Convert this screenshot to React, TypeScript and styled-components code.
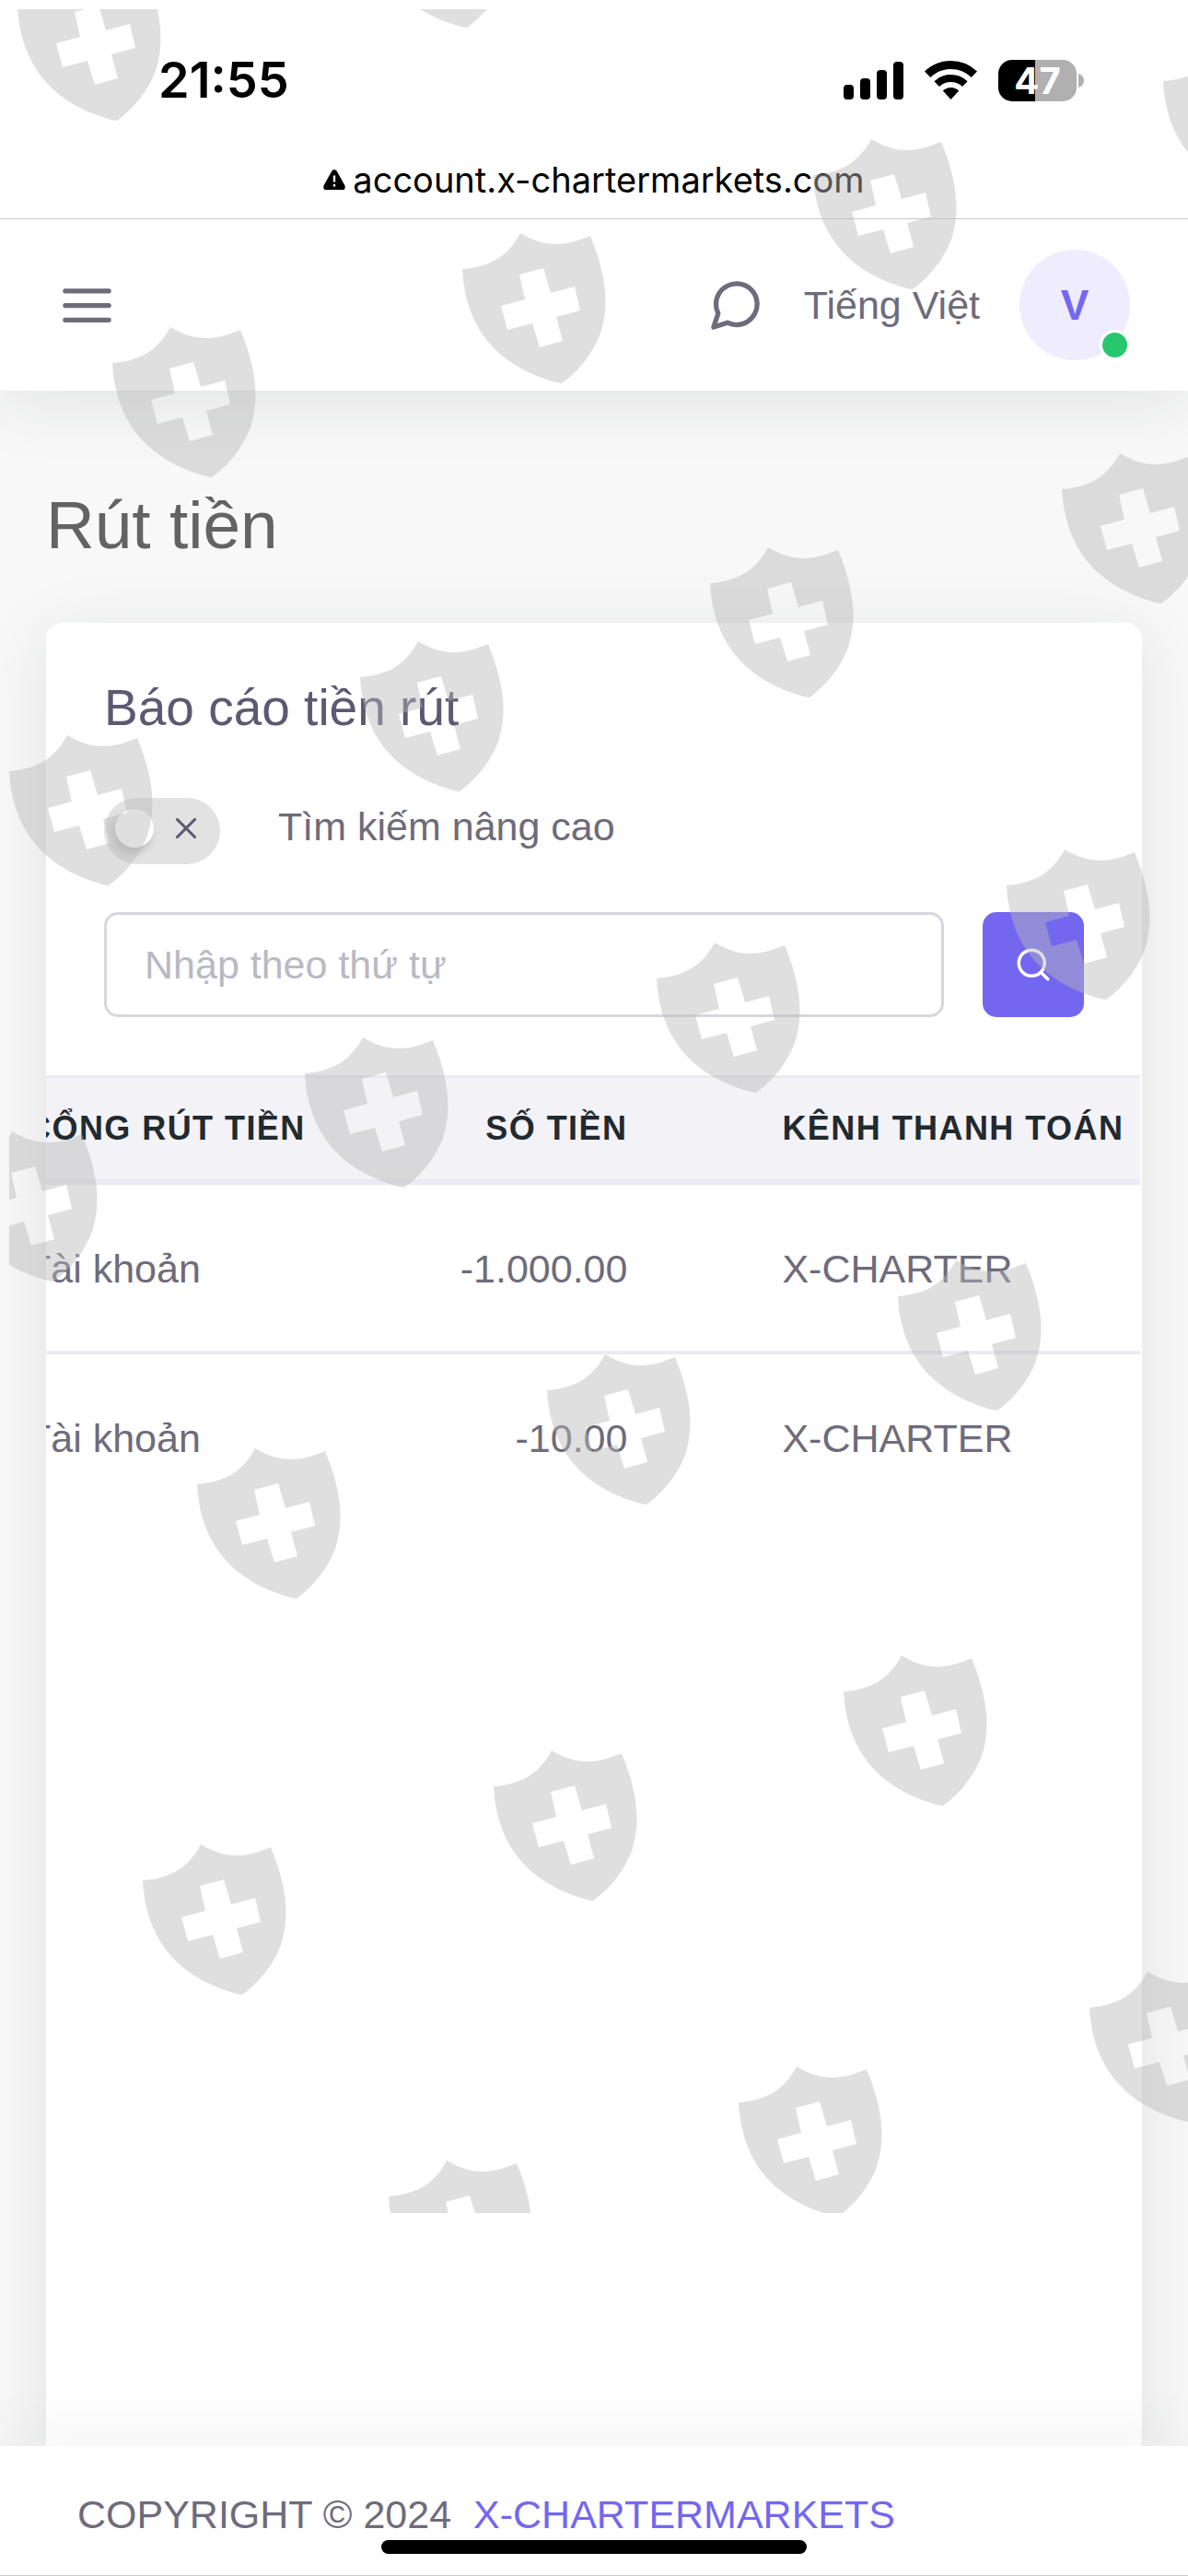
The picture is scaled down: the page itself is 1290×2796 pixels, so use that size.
import React, { useLayoutEffect, useRef } from "react";
import styled, { createGlobalStyle } from "styled-components";
import { Search, X } from "lucide-react";

const GlobalStyle = createGlobalStyle`
  *, *::before, *::after { box-sizing: border-box; }
  body {
    margin: 0;
    background: #f8f8f8;
    color: #6e6b7b;
    font-family: "Liberation Sans", Arial, sans-serif;
    font-size: 43px;
    line-height: 63px;
  }
`;

const Page = styled.div`
  position: relative;
  display: flex;
  flex-direction: column;
  min-height: 100vh;
  overflow: hidden;
`;

/* ---------- phone status and address bars ---------- */

const BrowserChrome = styled.div`
  position: relative;
  z-index: 3;
  background: #fff;
  border-bottom: 1px solid #c8c8c8;
  color: #000;
  font-family: Inter, sans-serif;
`;

const StatusBar = styled.div`
  display: flex;
  align-items: center;
  justify-content: space-between;
  height: 174px;
  padding: 0 113px 0 172px;
`;

const Clock = styled.time`
  font-size: 54px;
  font-weight: 600;
  line-height: 64px;
`;

const StatusIcons = styled.div`
  display: flex;
  align-items: center;
  gap: 23px;
`;

const BatteryWrap = styled.div`
  display: flex;
  align-items: center;
  gap: 2px;
`;

const BatteryBody = styled.div`
  display: flex;
  align-items: center;
  justify-content: center;
  width: 85px;
  height: 45px;
  border-radius: 15px;
  background: linear-gradient(to right, #000 47%, #b0b0b0 47%);
  color: #fff;
  font-size: 40px;
  font-weight: 700;
  line-height: 45px;
`;

const AddressBar = styled.div`
  display: flex;
  align-items: center;
  justify-content: center;
  gap: 8px;
  padding-bottom: 21px;
  font-size: 38px;
  line-height: 42px;
`;

/* ---------- navbar ---------- */

const Navbar = styled.header`
  position: relative;
  z-index: 2;
  display: flex;
  align-items: center;
  justify-content: space-between;
  padding: 33px 63px;
  background: #fff;
  box-shadow: 0 12px 72px rgba(34, 41, 47, 0.1);
`;

const NavGroup = styled.nav`
  display: flex;
  align-items: center;
  gap: 43px;
`;

const IconButton = styled.button`
  display: flex;
  padding: 0;
  border: 0;
  background: none;
  color: inherit;
`;

const NavLink = styled.a`
  color: inherit;
  text-decoration: none;
`;

const Avatar = styled.button`
  position: relative;
  width: 120px;
  height: 120px;
  padding: 0;
  border: 0;
  border-radius: 50%;
  background: #efedfd;
  color: #7367f0;
  font: 700 46px/63px "Liberation Sans", Arial, sans-serif;
`;

const OnlineDot = styled.span`
  position: absolute;
  right: 0;
  bottom: 0;
  width: 33px;
  height: 33px;
  border: 3px solid #fff;
  border-radius: 50%;
  background: #28c76f;
`;

/* ---------- content ---------- */

const Main = styled.main`
  display: flex;
  flex: 1;
  flex-direction: column;
  padding: 103px 50px 0;
`;

const PageTitle = styled.h1`
  margin: 0 0 63px;
  color: #636363;
  font-size: 73px;
  font-weight: 400;
  line-height: 86px;
`;

const Card = styled.section`
  flex: 1;
  overflow: hidden;
  border-radius: 18px 18px 0 0;
  background: #fff;
`;

const CardShadow = styled.div`
  display: flex;
  flex: 1;
  flex-direction: column;
  border-radius: 18px 18px 0 0;
  box-shadow: 0 12px 72px rgba(34, 41, 47, 0.1);
`;

const CardBody = styled.div`
  padding: 63px;
`;

const CardTitle = styled.h2`
  margin: 0 0 69px;
  color: #5e5873;
  font-size: 55px;
  font-weight: 400;
  line-height: 58px;
`;

const SwitchLabel = styled.label`
  display: flex;
  align-items: flex-start;
  gap: 63px;
  margin-bottom: 52px;
`;

const SwitchInput = styled.input`
  position: absolute;
  width: 1px;
  height: 1px;
  margin: 0;
  opacity: 0;
`;

const SwitchTrack = styled.span`
  display: flex;
  align-items: center;
  justify-content: space-between;
  width: 126px;
  height: 72px;
  padding: 12px 18px 18px 12px;
  border-radius: 36px;
  background: #e2e2e2;
  color: #5e5873;
`;

const SwitchKnob = styled.span`
  width: 42px;
  height: 42px;
  border-radius: 50%;
  background: #fff;
  box-shadow: -3px 6px 9px rgba(34, 41, 47, 0.2);
`;

const SearchForm = styled.form`
  display: flex;
  gap: 42px;
`;

const SearchInput = styled.input`
  flex: 1;
  min-width: 0;
  height: 114px;
  padding: 0 41px;
  border: 3px solid #d8d6de;
  border-radius: 15px;
  background: transparent;
  color: #6e6b7b;
  font: inherit;
  &::placeholder { color: #b9b9c3; opacity: 1; }
`;

const SearchButton = styled.button`
  display: flex;
  align-items: center;
  justify-content: center;
  width: 110px;
  height: 114px;
  padding: 0;
  border: 0;
  border-radius: 15px;
  background: #7367f0;
  color: #fff;
`;

const TableScroller = styled.div`
  margin-right: 2px;
  overflow-x: auto;
  scrollbar-width: none;
`;

const Table = styled.table`
  min-width: 100%;
  border-spacing: 0;
  white-space: nowrap;
`;

const HeadCell = styled.th<{ $end?: boolean }>`
  padding: 28px 84px;
  border-top: 3px solid #ebe9f1;
  border-bottom: 6px solid #ebe9f1;
  background: #f3f2f7;
  color: #22292f;
  font-size: 36px;
  letter-spacing: 0.04em;
  line-height: 54px;
  text-align: ${(p) => (p.$end ? "right" : "left")};
  text-transform: uppercase;
`;

const Row = styled.tr`
  & + & > td { border-top: 4px solid #ebe9f1; }
`;

const Cell = styled.td<{ $end?: boolean }>`
  padding: 59px 84px 57px;
  line-height: 64px;
  text-align: ${(p) => (p.$end ? "right" : "left")};
`;

/* ---------- footer ---------- */

const Footer = styled.footer`
  position: relative;
  z-index: 2;
  padding: 43px 84px 34px;
  border-bottom: 1px solid #c8c8c8;
  background: #fff;
  box-shadow: 0 -12px 72px rgba(34, 41, 47, 0.05);
`;

const FooterLink = styled.a`
  margin-left: 12px;
  color: #7367f0;
  text-decoration: none;
`;

const HomeIndicator = styled.div`
  position: absolute;
  bottom: 23px;
  left: 50%;
  width: 462px;
  height: 15px;
  margin-left: -231px;
  border-radius: 8px;
  background: #000;
`;

/* ---------- watermark ---------- */

const Watermark = styled.svg`
  position: absolute;
  z-index: 4;
  top: 10px;
  left: 10px;
  width: calc(100% - 10px);
  height: 2392px;
  overflow: hidden;
  pointer-events: none;
`;

const shields: [number, number][] = [
  [397, -146], [17, -45], [1261, 36], [881, 138], [500, 240], [120, 342],
  [1151, 479], [769, 581], [389, 683], [8, 785],
  [1091, 909], [711, 1010], [329, 1113], [-52, 1215],
  [973, 1355], [592, 1457], [212, 1559],
  [914, 1784], [534, 1887], [153, 1989],
  [1181, 2127], [800, 2230], [420, 2332],
];

const shieldPath =
  "M2 52C32 50 52 38 65 13C92 29 112 28 141 16C160 62 161 94 152 122C143 145 128 163 110 176Q106 176 97 173C36 154 5 112 2 52Z" +
  "M64 58L70 85L44 92L51 118L78 111L86 137L111 130L104 104L130 97L124 71L98 78L90 51Z";

function ShieldWatermark() {
  return (
    <Watermark aria-hidden="true">
      {shields.map(([x, y]) => (
        <path
          key={`${x},${y}`}
          d={shieldPath}
          transform={`translate(${x - 10} ${y - 10})`}
          fill="#b8b8b8"
          fillOpacity="0.45"
          fillRule="evenodd"
        />
      ))}
    </Watermark>
  );
}

function SignalIcon() {
  return (
    <svg width="65" height="41" aria-hidden="true">
      <rect x="0" y="25" width="11" height="16" rx="4" />
      <rect x="18" y="18" width="11" height="23" rx="4" />
      <rect x="36" y="9" width="11" height="32" rx="4" />
      <rect x="54" y="0" width="11" height="41" rx="4" />
    </svg>
  );
}

function WifiIcon() {
  return (
    <svg width="57" height="42" aria-hidden="true">
      <g fill="none" stroke="#000">
        <path d="M3.1 14.8A36.5 36.5 0 0 1 53.9 14.8" strokeWidth="9" />
        <path d="M13.2 25.2A22 22 0 0 1 43.8 25.2" strokeWidth="8" />
      </g>
      <path d="M19.8 32.5A12.5 12.5 0 0 1 37.2 32.5L28.5 42Z" />
    </svg>
  );
}

function WarningIcon() {
  return (
    <svg width="24" height="22" viewBox="0 0 24 22" aria-hidden="true">
      <path d="M9.4 1.6Q12 -1.6 14.6 1.6L23.4 17.2Q24.6 22 20.6 22H3.4Q-0.6 22 0.6 17.2Z" />
      <path d="M12 6.5V13.5M12 16V18.4" stroke="#fff" strokeWidth="2.4" />
    </svg>
  );
}

const line = {
  fill: "none",
  stroke: "currentColor",
  strokeWidth: 2,
  strokeLinecap: "round" as const,
  strokeLinejoin: "round" as const,
};

function MenuIcon() {
  return (
    <svg width="63" height="63" viewBox="0 0 24 24" {...line} aria-hidden="true">
      <path d="M3 6H21M3 12H21M3 18H21" />
    </svg>
  );
}

function ChatIcon() {
  return (
    <svg width="63" height="63" viewBox="0 0 24 24" {...line} aria-hidden="true">
      <path d="M21 11.5a8.38 8.38 0 0 1-.9 3.8 8.5 8.5 0 0 1-7.6 4.7 8.38 8.38 0 0 1-3.8-.9L3 21l1.9-5.7a8.38 8.38 0 0 1-.9-3.8 8.5 8.5 0 0 1 4.7-7.6 8.38 8.38 0 0 1 3.8-.9h.5a8.48 8.48 0 0 1 8 8v.5z" />
    </svg>
  );
}

const withdrawals = [
  { gateway: "Tài khoản", amount: "-1.000.00", channel: "X-CHARTER" },
  { gateway: "Tài khoản", amount: "-10.00", channel: "X-CHARTER" },
];

function WithdrawalTable() {
  const scroller = useRef<HTMLDivElement>(null);

  useLayoutEffect(() => {
    if (scroller.current) scroller.current.scrollLeft = 105;
  }, []);

  return (
    <TableScroller ref={scroller}>
      <Table>
        <thead>
          <tr>
            <HeadCell scope="col">Cổng rút tiền</HeadCell>
            <HeadCell scope="col" $end>Số tiền</HeadCell>
            <HeadCell scope="col">Kênh thanh toán</HeadCell>
          </tr>
        </thead>
        <tbody>
          {withdrawals.map((w) => (
            <Row key={w.amount}>
              <Cell>{w.gateway}</Cell>
              <Cell $end>{w.amount}</Cell>
              <Cell>{w.channel}</Cell>
            </Row>
          ))}
        </tbody>
      </Table>
    </TableScroller>
  );
}

export default function App() {
  return (
    <>
      <GlobalStyle />
      <Page>
        <BrowserChrome>
          <StatusBar>
            <Clock>21:55</Clock>
            <StatusIcons>
              <SignalIcon />
              <WifiIcon />
              <BatteryWrap>
                <BatteryBody>47</BatteryBody>
                <svg width="6" height="15" aria-hidden="true">
                  <path d="M0 0Q6 2 6 7.5T0 15Z" fill="#b0b0b0" />
                </svg>
              </BatteryWrap>
            </StatusIcons>
          </StatusBar>
          <AddressBar>
            <WarningIcon />
            <span>account.x-chartermarkets.com</span>
          </AddressBar>
        </BrowserChrome>

        <Navbar>
          <IconButton type="button" aria-label="Menu">
            <MenuIcon />
          </IconButton>
          <NavGroup>
            <IconButton type="button" aria-label="Chat">
              <ChatIcon />
            </IconButton>
            <NavLink href="#language">Tiếng Việt</NavLink>
            <Avatar type="button">
              V
              <OnlineDot />
            </Avatar>
          </NavGroup>
        </Navbar>

        <Main>
          <PageTitle>Rút tiền</PageTitle>
          <CardShadow>
            <Card>
              <CardBody>
                <CardTitle>Báo cáo tiền rút</CardTitle>
                <SwitchLabel>
                  <SwitchInput type="checkbox" />
                  <SwitchTrack>
                    <SwitchKnob />
                    <X size={38} strokeWidth={2} />
                  </SwitchTrack>
                  <span>Tìm kiếm nâng cao</span>
                </SwitchLabel>
                <SearchForm onSubmit={(e) => e.preventDefault()}>
                  <SearchInput type="text" aria-label="Nhập theo thứ tự" placeholder="Nhập theo thứ tự" />
                  <SearchButton type="submit" aria-label="Search">
                    <Search size={42} strokeWidth={2} />
                  </SearchButton>
                </SearchForm>
              </CardBody>
              <WithdrawalTable />
            </Card>
          </CardShadow>
        </Main>

        <Footer>
          COPYRIGHT © 2024 <FooterLink href="#home">X-CHARTERMARKETS</FooterLink>
          <HomeIndicator />
        </Footer>

        <ShieldWatermark />
      </Page>
    </>
  );
}
